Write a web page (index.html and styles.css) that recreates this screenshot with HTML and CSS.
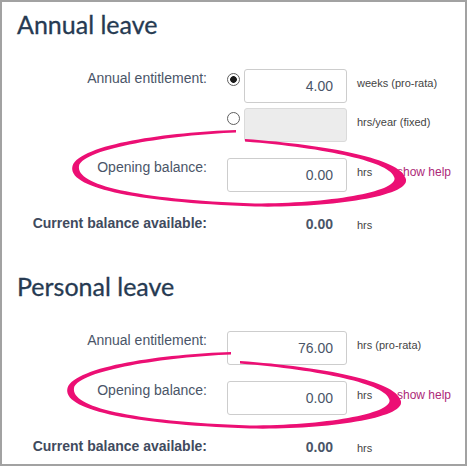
FILE: index.html
```html
<!DOCTYPE html>
<html lang="en">
<head>
<meta charset="utf-8">
<title>Leave balances</title>
<link rel="stylesheet" href="styles.css">
</head>
<body>
<div class="frame">
  <section class="leave">
    <h2 class="title">Annual leave</h2>
    <div class="row row-tight">
      <label class="lbl">Annual entitlement:</label>
      <div class="ctrl">
        <input type="radio" name="ann" class="radio" checked>
        <input type="text" class="field field-short" value="4.00">
      </div>
      <span class="unit">weeks (pro-rata)</span>
    </div>
    <div class="row">
      <span class="lbl"></span>
      <div class="ctrl">
        <input type="radio" name="ann" class="radio">
        <input type="text" class="field field-short" value="" disabled>
      </div>
      <span class="unit">hrs/year (fixed)</span>
    </div>
    <div class="row">
      <label class="lbl">Opening balance:</label>
      <div class="ctrl"><input type="text" class="field" value="0.00"></div>
      <span class="unit unit-fixed">hrs</span>
      <a class="help" href="#">show help</a>
    </div>
    <div class="row row-total">
      <span class="lbl lbl-bold">Current balance available:</span>
      <span class="total">0.00</span>
      <span class="unit unit-total">hrs</span>
    </div>
  </section>

  <section class="leave leave-next">
    <h2 class="title">Personal leave</h2>
    <div class="row">
      <label class="lbl">Annual entitlement:</label>
      <div class="ctrl"><input type="text" class="field" value="76.00"></div>
      <span class="unit">hrs (pro-rata)</span>
    </div>
    <div class="row">
      <label class="lbl">Opening balance:</label>
      <div class="ctrl"><input type="text" class="field" value="0.00"></div>
      <span class="unit unit-fixed">hrs</span>
      <a class="help" href="#">show help</a>
    </div>
    <div class="row row-total">
      <span class="lbl lbl-bold">Current balance available:</span>
      <span class="total">0.00</span>
      <span class="unit unit-total">hrs</span>
    </div>
  </section>

  <svg class="marks" width="467" height="466" viewBox="0 0 467 466" aria-hidden="true">
    <path id="loop" fill="#ec0f74" d="M236 130 C170 132 80 144 72.5 166 C67 187 130 202 255 206.5 C330 208 414 196 405.5 178 C400 159 330 145 245 139 L245 141.5 C326 148 392 162 394.5 178 C397 192 328 203.5 255 203.5 C134 199 76 185 79 166 C84 148 172 135 236 132.5 Z"/>
    <use href="#loop" transform="translate(-5 222)"/>
  </svg>
</div>
</body>
</html>
```

FILE: styles.css
```css
html, body {
  margin: 0;
  padding: 0;
  background: #ffffff;
}

body {
  font-family: "Liberation Sans", Arial, sans-serif;
  color: #4a5568;
}

.frame {
  position: relative;
  box-sizing: border-box;
  width: 467px;
  height: 466px;
  border: 2px solid #a2a2a2;
  padding: 7px 0 0 15px;
  background: #ffffff;
  overflow: hidden;
}

.title {
  margin: 0 0 30px;
  font-family: Lato, "Open Sans", sans-serif;
  font-weight: 400;
  font-size: 25px;
  line-height: 30px;
  color: #263a52;
  -webkit-text-stroke: 0.3px #263a52;
}

.leave-next {
  margin-top: 40px;
}

.row {
  display: flex;
  align-items: flex-start;
  height: 34px;
  margin-bottom: 16px;
}

.row-tight {
  margin-bottom: 5px;
}

.row-total {
  height: 23px;
  margin-bottom: 0;
}

.lbl {
  box-sizing: border-box;
  width: 190px;
  margin-right: 20px;
  padding-top: 1px;
  font-size: 14px;
  line-height: 16px;
  text-align: right;
  color: #4a5568;
}

.lbl-bold {
  padding-top: 7px;
  font-weight: 700;
  color: #3f4b5e;
}

.ctrl {
  display: flex;
  align-items: flex-start;
  width: 120px;
}

.radio {
  appearance: none;
  -webkit-appearance: none;
  box-sizing: border-box;
  width: 13px;
  height: 13px;
  margin: 4px 4px 0 0;
  border: 1px solid #5f5f5f;
  border-radius: 50%;
  background: #ffffff;
  flex: none;
}

.radio:checked {
  background: radial-gradient(circle, #1b1b1b 0 3px, #ffffff 3.7px);
}

.field {
  box-sizing: border-box;
  width: 120px;
  height: 34px;
  margin: 0;
  padding: 0 13px;
  border: 1px solid #cdcdcd;
  border-radius: 3px;
  background: #ffffff;
  font-family: "Liberation Sans", Arial, sans-serif;
  font-size: 14px;
  color: #4a5568;
  text-align: right;
  outline: none;
}

.field-short {
  width: 103px;
}

.field:disabled {
  background: #ececec;
  border-color: #dadada;
}

.unit {
  margin-left: 10px;
  padding-top: 7px;
  font-size: 11px;
  line-height: 14px;
  color: #444444;
  white-space: nowrap;
}

.unit-fixed {
  width: 40px;
}

.unit-total {
  padding-top: 10px;
}

.help {
  padding-top: 7px;
  font-size: 12px;
  line-height: 14px;
  color: #ad2879;
  text-decoration: none;
  white-space: nowrap;
}

.total {
  box-sizing: border-box;
  width: 120px;
  padding: 8px 14px 0 0;
  font-size: 14px;
  line-height: 16px;
  font-weight: 700;
  text-align: right;
  color: #4a5568;
}

.marks {
  position: absolute;
  left: -2px;
  top: -2px;
  pointer-events: none;
}
```
